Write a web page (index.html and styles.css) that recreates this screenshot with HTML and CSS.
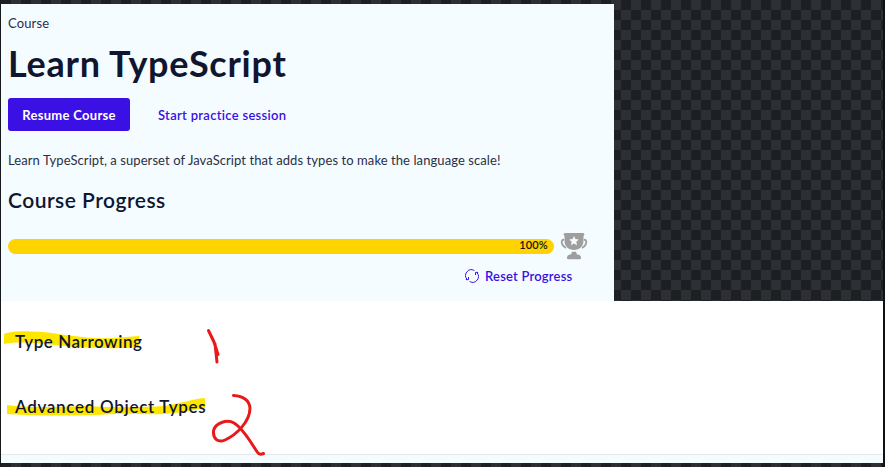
FILE: index.html
```html
<!DOCTYPE html>
<html lang="en">
<head>
<meta charset="utf-8">
<title>Learn TypeScript</title>
<link rel="stylesheet" href="styles.css">
</head>
<body>
<main class="page">
  <section class="course">
    <p class="eyebrow">Course</p>
    <h1 class="title">Learn TypeScript</h1>
    <div class="actions">
      <button class="resume"><span>Resume Course</span></button>
      <a class="practice">Start practice session</a>
    </div>
    <p class="summary">Learn TypeScript, a superset of JavaScript that adds types to make the language scale!</p>
    <h2 class="progress-title">Course Progress</h2>
    <div class="progress">
      <div class="bar"><span class="percent">100%</span></div>
      <svg class="trophy" width="28" height="28" viewBox="0 0 28 28">
        <path d="M5 1h18q1.500 0 1.500 1.500L23.500 4v5c0 5-4 9-9.500 9S4.500 14 4.500 9V4L3.500 2.500Q3.500 1 5 1z" fill="#9e9e9e"/>
        <path d="M4 7.800C1.500 7.500 1.200 10 2.300 12.500c1 1.800 2.200 2.800 3.700 3.300M24 7.800c2.500-.3 2.800 2.200 1.700 4.700-1 1.800-2.200 2.800-3.700 3.300" fill="none" stroke="#9e9e9e" stroke-width="1.800"/>
        <path d="M12 19.800h4l1 2.800h1.500q2.500 1 2.500 3v.5q0 1.200-1.200 1.200H8.200Q7 27.300 7 26.100v-.5q0-2 2.500-3H11z" fill="#9e9e9e"/>
        <path d="M14 4l1.400 3.100 3.400.4-2.500 2.300.7 3.400-3-1.700-3 1.700.7-3.400-2.500-2.300 3.400-.4z" fill="#f5fcff"/>
      </svg>
    </div>
    <a class="reset">
      <svg width="14" height="14" viewBox="0 0 14 14" fill="none" stroke="#3a10e5" stroke-width="1">
        <path d="M9.300 1.500A5.800 5.800 0 0 0 2 10.300M4.700 12.500A5.800 5.800 0 0 0 12 3.700"/>
        <path d="M.8 10.600H3.500V8M13.200 3.400H10.500V6"/>
      </svg>
      <span>Reset Progress</span>
    </a>
  </section>
  <section class="modules">
    <h3 class="module first">Type Narrowing</h3>
    <h3 class="module second">Advanced Object Types</h3>
    <svg class="ink highlighter" width="280" height="160" viewBox="0 0 280 160">
      <path d="M4 33C13 29 35 30 52 32C76 36 97 38 114 37L139 35V46C119 48 96 47 77 46C49 44 25 39 4 43Z"/>
      <path d="M7 104C28 107 59 106 87 105C117 107 146 106 164 105C179 103 191 98 205 97V107C190 110 178 112 164 113C145 114 131 112 115 113C75 115 44 115 7 113Z"/>
    </svg>
    <svg class="ink pen" width="280" height="160" viewBox="0 0 280 160">
      <path d="M208.500 29.500L214 41L218 53.500M215 43L217 61"/>
      <path d="M233.500 94.500C242 95 249 98 250 107C250 121 236 134 225 139C218 142 213 138 213.500 130C215 122 227 118 234 122C243 127 251 142 258 152Q260 154 263.500 152.500"/>
    </svg>
  </section>
  <div class="next"></div>
</main>
</body>
</html>
```
FILE: styles.css
```css
* { box-sizing: border-box; }
body {
  margin: 0;
  width: 885px;
  height: 467px;
  overflow: hidden;
  background: repeating-conic-gradient(#2e2f34 0 25%, #1d2023 0 50%) 1px 0 / 20px 20px;
  font-family: Lato, "Liberation Sans", sans-serif;
  color: #10162f;
}
h1, h2, h3, p { margin: 0; font-weight: 600; white-space: nowrap; }
.page {
  height: 467px;
  padding-top: 4px;
  border-left: 1px solid #17191c;
  border-right: 2px solid #101113;
}
.course {
  width: 613px;
  height: 297px;
  padding: 10px 26px 0 7px;
  background: #f5fcff;
}
.eyebrow { font-size: 13px; line-height: 18px; font-weight: 400; letter-spacing: .15px; color: #2a2f45; }
.title { margin-top: 7px; font-size: 36px; font-weight: 700; line-height: 48px; letter-spacing: .74px; }
.actions { display: flex; align-items: center; gap: 28px; margin-top: 11px; }
.resume {
  width: 122px;
  height: 33px;
  padding: 1px 0 0;
  border: 0;
  border-radius: 3px;
  background: #3a10e5;
  color: #fff;
  font: 700 13px/18px Lato, sans-serif;
  letter-spacing: .3px;
}
.practice { color: #3a10e5; font-size: 13px; font-weight: 600; letter-spacing: .3px; }
.summary { margin-top: 19px; font-size: 13px; line-height: 20px; font-weight: 400; letter-spacing: .08px; color: #2a2f45; }
.progress-title { margin-top: 15px; font-size: 21px; line-height: 30px; letter-spacing: .48px; }
.progress { display: flex; align-items: center; gap: 6px; margin-top: 17px; height: 28px; }
.bar {
  width: 546px;
  height: 15px;
  padding-right: 6px;
  border-radius: 8px;
  background: #ffd300;
  color: #141414;
  text-align: right;
  font-size: 11px;
  line-height: 12px;
}
.percent { font-weight: 600; letter-spacing: .2px; }
.trophy { flex: none; }
.reset {
  display: flex;
  align-items: center;
  gap: 6px;
  width: 120px;
  height: 18px;
  margin: 7px 0 0 457px;
  color: #3a10e5;
  font-size: 13px;
  font-weight: 600;
  letter-spacing: .2px;
  white-space: nowrap;
}
.reset svg { flex: none; }
.modules {
  position: relative;
  isolation: isolate;
  height: 153px;
  padding: 28px 14px 0;
  background: #fff;
}
.module { height: 65px; font-size: 17px; line-height: 26px; }
.first { letter-spacing: .55px; }
.second { letter-spacing: .7px; }
.ink { position: absolute; left: -1px; top: 0; }
.highlighter { z-index: -1; fill: #ffe600; }
.pen { fill: none; stroke: #e81919; stroke-width: 3; stroke-linecap: round; stroke-linejoin: round; }
.next { height: 9px; background: #f5fcff; border-top: 1px solid #e3e8ea; }
```
